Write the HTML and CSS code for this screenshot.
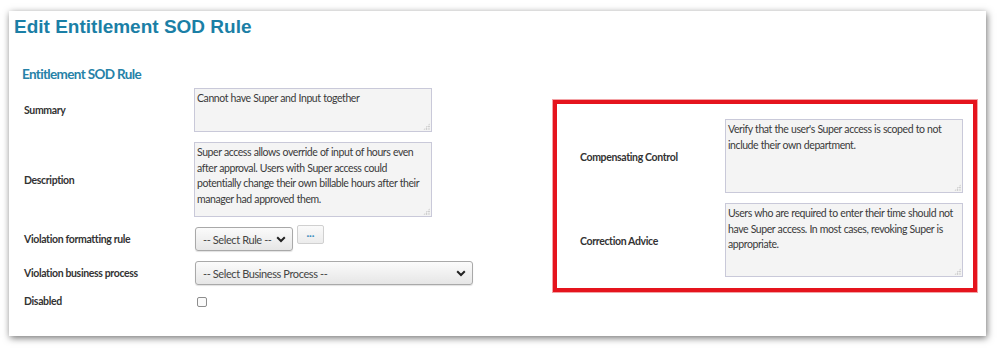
FILE: index.html
```html
<!DOCTYPE html>
<html>
<head>
<meta charset="utf-8">
<link rel="stylesheet" href="styles.css">
</head>
<body>
<div class="card">
  <h1 class="title">Edit Entitlement SOD Rule</h1>
  <h2 class="subtitle">Entitlement SOD Rule</h2>
  <div class="body">
    <div class="form">
      <div class="label">Summary</div>
      <div class="field"><div class="ta ta-sum">Cannot have Super and Input together<span class="grip"></span></div></div>

      <div class="label">Description</div>
      <div class="field"><div class="ta ta-desc">Super access allows override of input of hours even after approval. Users with Super access could potentially change their own billable hours after their manager had approved them.<span class="grip"></span></div></div>

      <div class="label">Violation formatting rule</div>
      <div class="field row-rule">
        <div class="select select-rule"><span>-- Select Rule --</span>
          <svg class="chev" width="10" height="7" viewBox="0 0 10 7"><path d="M1.2 1.3 L5 5 L8.8 1.3" fill="none" stroke="#222" stroke-width="2"/></svg>
        </div>
        <div class="dots">···</div>
      </div>

      <div class="label">Violation business process</div>
      <div class="field">
        <div class="select select-bp"><span>-- Select Business Process --</span>
          <svg class="chev" width="10" height="7" viewBox="0 0 10 7"><path d="M1.2 1.3 L5 5 L8.8 1.3" fill="none" stroke="#222" stroke-width="2"/></svg>
        </div>
      </div>

      <div class="label">Disabled</div>
      <div class="field"><div class="checkbox"></div></div>
    </div>

    <div class="highlight">
      <div class="hl-label">Compensating Control</div>
      <div class="ta ta-hl">Verify that the user's Super access is scoped to not include their own department.<span class="grip"></span></div>
      <div class="hl-label">Correction Advice</div>
      <div class="ta ta-hl">Users who are required to enter their time should not have Super access. In most cases, revoking Super is appropriate.<span class="grip"></span></div>
    </div>
  </div>
</div>
</body>
</html>
```

FILE: styles.css
```css
html, body {
  margin: 0;
  padding: 0;
  background: #ffffff;
}

body {
  width: 998px;
  height: 351px;
  overflow: hidden;
}

.card {
  box-sizing: border-box;
  margin: 11px 0 0 9px;
  width: 977px;
  height: 325px;
  padding: 4px 9px 0 5px;
  background: #ffffff;
  box-shadow: 1px 2px 7px rgba(0, 0, 0, 0.55);
  display: flex;
  flex-direction: column;
}

.title {
  margin: 0;
  font-family: "Liberation Sans", Arial, sans-serif;
  font-weight: bold;
  font-size: 19px;
  line-height: 24px;
  color: #1b7fa6;
}

.subtitle {
  margin: 27px 0 0 8px;
  font-family: Lato, "Open Sans", sans-serif;
  font-weight: bold;
  font-size: 13.5px;
  line-height: 17px;
  letter-spacing: -0.65px;
  color: #2682a8;
}

.body {
  margin-top: 5px;
  display: flex;
  align-items: flex-start;
}

.form {
  margin-left: 10px;
  display: grid;
  grid-template-columns: 170px auto;
  row-gap: 10px;
  align-items: center;
  font-family: Lato, "Open Sans", sans-serif;
}

.label, .hl-label {
  font-family: Lato, "Open Sans", sans-serif;
  font-weight: bold;
  font-size: 10.5px;
  letter-spacing: -0.35px;
  color: #333333;
  white-space: nowrap;
}

.field {
  display: flex;
  align-items: center;
}

.ta {
  position: relative;
  box-sizing: border-box;
  width: 238px;
  padding: 2px 2px;
  background: #f4f4f4;
  border: 1px solid #c9c9d9;
  font-family: Lato, "Open Sans", sans-serif;
  font-size: 10.5px;
  line-height: 15.6px;
  letter-spacing: -0.42px;
  word-spacing: 0.3px;
  color: #3a3a3a;
}

.ta-sum { height: 44px; }
.ta-desc { height: 75px; }
.ta-hl { height: 74px; }

.grip {
  position: absolute;
  right: 1px;
  bottom: 1px;
  width: 7px;
  height: 7px;
  background:
    radial-gradient(circle, #b0b0b0 0.6px, transparent 0.9px) 0 0 / 2.4px 2.4px;
  clip-path: polygon(100% 0, 100% 100%, 0 100%);
}

.row-rule {
  gap: 4px;
  align-items: flex-start;
}

.select {
  box-sizing: border-box;
  height: 24px;
  display: flex;
  align-items: center;
  justify-content: space-between;
  padding: 0 6px 0 7px;
  border: 1px solid #a9a9a9;
  border-radius: 3px;
  background: linear-gradient(#fbfbfb, #e6e6e6);
  box-shadow: 0 1px 1px rgba(0, 0, 0, 0.12);
  font-family: Lato, "Open Sans", sans-serif;
  font-size: 11px;
  letter-spacing: -0.4px;
  color: #444444;
  white-space: nowrap;
}

.select-rule {
  width: 98px;
  margin-left: 1px;
}

.select-bp {
  width: 278px;
  margin-left: 1px;
}

.chev {
  display: block;
  flex: none;
}

.dots {
  box-sizing: border-box;
  width: 27px;
  height: 19px;
  margin-top: -2px;
  border: 1px solid #d0d0d0;
  border-radius: 2px;
  background: linear-gradient(#fafafa, #ececec);
  display: flex;
  align-items: center;
  justify-content: center;
  font-family: Lato, sans-serif;
  font-size: 10px;
  font-weight: bold;
  color: #3f8fc0;
  line-height: 1;
}

.checkbox {
  box-sizing: border-box;
  width: 10px;
  height: 10px;
  margin: 2px 0 0 3px;
  border: 1px solid #8d8d8d;
  border-radius: 2px;
  background: #fafafa;
}

.highlight {
  box-sizing: border-box;
  margin: 12px 0 0 auto;
  width: 424px;
  height: 192px;
  padding: 15px 10px 0 23px;
  border: 4px solid #e5141d;
  box-shadow: 0 0 0 1px #f3a3a6;
  display: grid;
  grid-template-columns: 145px 238px;
  row-gap: 10px;
  align-content: start;
  align-items: center;
}

.highlight .hl-label {
  margin-top: 2px;
}
```
